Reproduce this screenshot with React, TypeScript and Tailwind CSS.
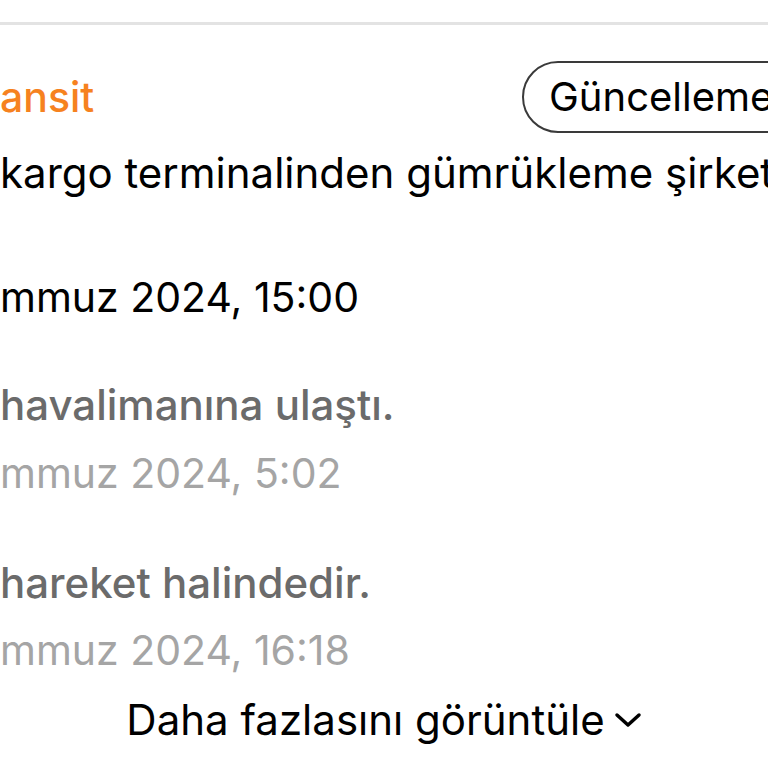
import React from 'react';

const font = { fontFamily: 'Inter, "Noto Sans", sans-serif' };

// text that starts off-screen to the left: the prefix hangs out of a zero-width box
const Clipped: React.FC<{ pre: string; text: string; className?: string }> = ({ pre, text, className }) => (
  <div className={`flex whitespace-nowrap ${className ?? ''}`}>
    <span className="flex w-0 shrink-0 justify-end">{pre}</span>
    <span>{text}</span>
  </div>
);

export default function App() {
  return (
    <div className="h-[768px] w-full overflow-hidden bg-white" style={font}>
      <div className="pt-[22px]">
        <div className="h-[3px] w-full bg-[#e3e3e3]" />
      </div>

      {/* Header: status + follow button */}
      <div className="mt-[36px] flex h-[72px] items-center">
        <div className="w-[522px] shrink-0">
          <Clipped pre="Tr" text="ansit" className="text-[41px] font-medium leading-[56px] text-[#f6821f]" />
        </div>
        <button className="flex h-[72px] shrink-0 items-center whitespace-nowrap rounded-full border-2 border-[#3a3a3a] pl-[25px] pr-8 text-[40px] text-black">
          Güncellemeleri al
        </button>
      </div>

      {/* Timeline */}
      <div className="text-[42px] leading-[62px]">
        <div className="mt-[9px] text-black">
          <Clipped pre="Ürün İstanbul Havalimanı " text="kargo terminalinden gümrükleme şirketine teslim edildi." />
          <Clipped pre="edildi." text="" className="h-[62px]" />
          <Clipped pre="18 Te" text="mmuz 2024, 15:00" className="text-[41px]" />
        </div>

        <div className="mt-[46px]">
          <Clipped pre="Gönderi varış " text="havalimanına ulaştı." className="font-medium text-[#6b6b6b]" />
          <Clipped pre="18 Te" text="mmuz 2024, 5:02" className="mt-[6px] text-[41px] text-[#a5a5a5]" />
        </div>

        <div className="mt-[48px]">
          <Clipped pre="Gönderi " text="hareket halindedir." className="font-medium text-[#6b6b6b]" />
          <Clipped pre="17 Te" text="mmuz 2024, 16:18" className="mt-[5px] text-[41px] text-[#a5a5a5]" />
        </div>

        <button className="mx-auto mt-[8px] flex items-center gap-[9px] text-black">
          <span>Daha fazlasını görüntüle</span>
          <svg width="28" height="16" viewBox="0 0 28 16" fill="none" stroke="currentColor" strokeWidth="3.5" strokeLinecap="round" strokeLinejoin="round">
            <polyline points="3,3 14,13 25,3" />
          </svg>
        </button>
      </div>
    </div>
  );
}
